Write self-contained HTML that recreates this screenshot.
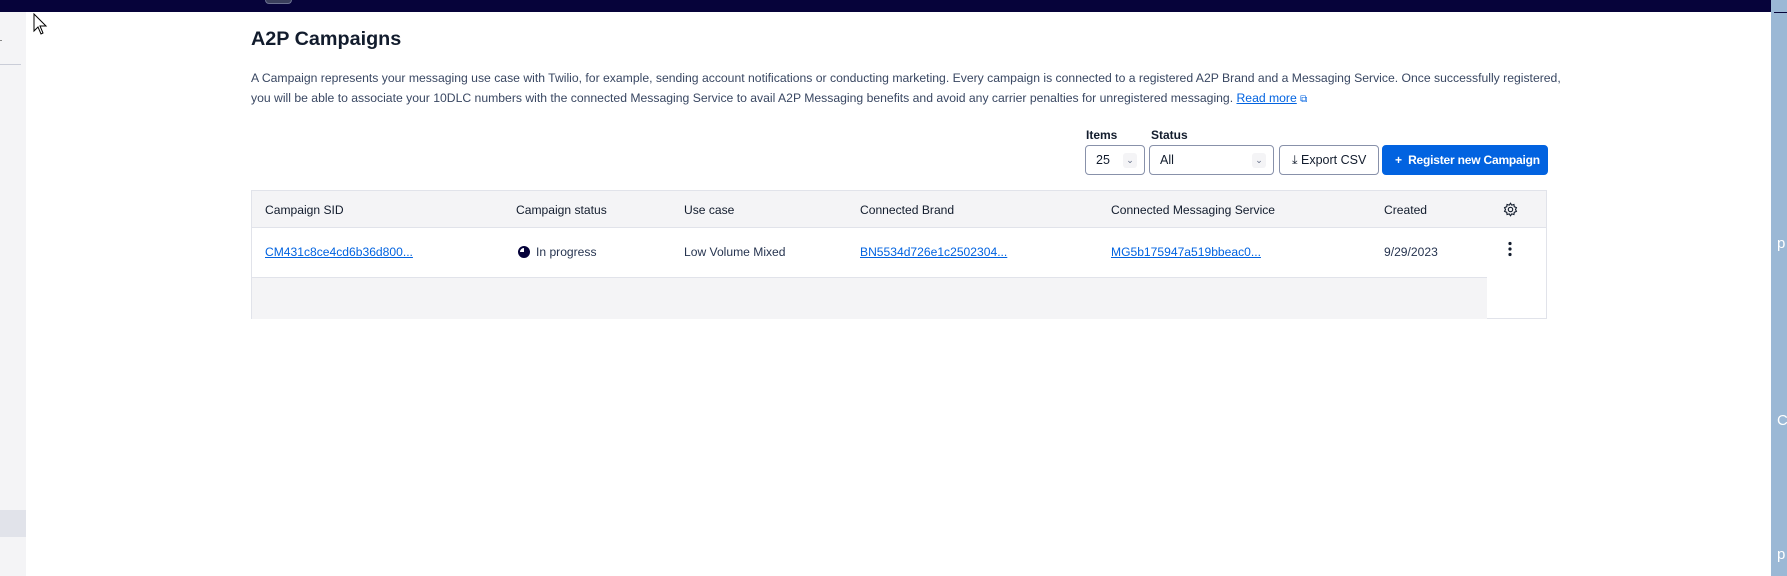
<!DOCTYPE html>
<html><head><meta charset="utf-8"><style>
*{box-sizing:border-box;margin:0;padding:0}
body{width:1787px;height:576px;overflow:hidden;background:#fff;font-family:"Liberation Sans",sans-serif;color:#121c2d;position:relative}
.abs{position:absolute}
.top{left:0;top:0;width:1787px;height:12px;background:#06033a}
.tab{left:265px;top:0;width:27px;height:4px;background:#3a3f5c;border-radius:0 0 4px 4px;border:1px solid #6a7090;border-top:none}
.side{left:0;top:12px;width:26px;height:564px;background:#f4f4f6}
h1{position:absolute;left:251px;top:28px;font-size:19.8px;font-weight:bold;color:#121c2d}
.desc{left:251px;font-size:12.2px;color:#394762;white-space:nowrap;letter-spacing:0}
.lbl{font-size:12px;font-weight:bold;top:128px}
.box{top:145px;height:30px;border:1px solid #8891aa;border-radius:4px;font-size:12.5px;display:flex;align-items:center;padding-left:10px;white-space:nowrap}
.chev{position:absolute;right:7px;top:7px;width:14px;height:15px;background:#f4f4f6;border-radius:3px;font-size:9px;color:#606b85;text-align:center;line-height:15px}
.table{left:251px;top:190px;width:1296px;height:129px;border:1px solid #e1e3ea}
.th{left:0;top:0;width:1294px;height:37px;background:#f4f4f6;border-bottom:1px solid #e1e3ea}
.t{font-size:12.1px;white-space:nowrap;color:#263450}
a{color:#0263e0;text-decoration:underline}
</style></head><body>
<div class="abs top"></div><div class="abs tab"></div>
<div class="abs side"></div>
<div class="abs" style="left:0;top:64px;width:21px;height:1px;background:#cacdd8"></div>
<div class="abs" style="left:0;top:510px;width:26px;height:27px;background:#e1e3ea"></div>
<div class="abs" style="left:0;top:40px;width:2px;height:1px;background:#888"></div>
<svg class="abs" style="left:33px;top:13px" width="16" height="24" viewBox="0 0 16 24"><path d="M1 1 L1 18 L5 14 L8 21 L10 20 L7 13 L13 13 Z" fill="#fff" stroke="#000" stroke-width="1"/></svg>
<h1>A2P Campaigns</h1>
<div class="abs desc" style="top:71px">A Campaign represents your messaging use case with Twilio, for example, sending account notifications or conducting marketing. Every campaign is connected to a registered A2P Brand and a Messaging Service. Once successfully registered,</div>
<div class="abs desc" style="top:91px">you will be able to associate your 10DLC numbers with the connected Messaging Service to avail A2P Messaging benefits and avoid any carrier penalties for unregistered messaging. <a>Read more</a> <span style="color:#0263e0;font-size:10px">⧉</span></div>
<div class="abs lbl" style="left:1086px">Items</div>
<div class="abs lbl" style="left:1151px">Status</div>
<div class="abs box" style="left:1085px;width:60px">25<span class="chev">⌄</span></div>
<div class="abs box" style="left:1149px;width:125px">All<span class="chev">⌄</span></div>
<div class="abs box" style="left:1279px;width:100px;font-size:12.5px;padding-left:12px">⤓&nbsp;Export CSV</div>
<div class="abs box" style="left:1382px;width:166px;background:#0263e0;border-color:#0263e0;color:#fff;font-weight:bold;padding-left:12px;font-size:12px;letter-spacing:-0.2px">+&nbsp; Register new Campaign</div>
<div class="abs table">
<div class="abs th"></div>
<div class="abs" style="left:0;top:86px;width:1235px;height:42px;background:#f4f4f6;border-top:1px solid #e1e3ea"></div>
<div class="abs t" style="left:13px;top:12px;color:#121c2d">Campaign SID</div>
<div class="abs t" style="left:264px;top:12px;color:#121c2d">Campaign status</div>
<div class="abs t" style="left:432px;top:12px;color:#121c2d">Use case</div>
<div class="abs t" style="left:608px;top:12px;color:#121c2d">Connected Brand</div>
<div class="abs t" style="left:859px;top:12px;color:#121c2d">Connected Messaging Service</div>
<div class="abs t" style="left:1132px;top:12px;color:#121c2d">Created</div>
<svg class="abs" style="left:1251px;top:11px" width="15" height="15" viewBox="0 0 24 24" fill="none" stroke="#121c2d" stroke-width="1.8"><circle cx="12" cy="12" r="3.5"/><path d="M12 2l2 3 3.5-1 .5 3.5 3.5 1.5-1.5 3 1.5 3-3.5 1.5-.5 3.5-3.5-1-2 3-2-3-3.5 1-.5-3.5L2.5 15l1.5-3-1.5-3L6 7.5 6.5 4 10 5z"/></svg>
<div class="abs t" style="left:13px;top:54px"><a>CM431c8ce4cd6b36d800...</a></div>
<svg class="abs" style="left:266px;top:55px" width="12" height="12" viewBox="0 0 12 12"><circle cx="6" cy="6" r="5" fill="none" stroke="#06033a" stroke-width="2"/><path d="M6 1A5 5 0 1 1 1 6H6Z" fill="#06033a"/></svg>
<div class="abs t" style="left:284px;top:54px">In progress</div>
<div class="abs t" style="left:432px;top:54px">Low Volume Mixed</div>
<div class="abs t" style="left:608px;top:54px"><a>BN5534d726e1c2502304...</a></div>
<div class="abs t" style="left:859px;top:54px"><a>MG5b175947a519bbeac0...</a></div>
<div class="abs t" style="left:1132px;top:54px">9/29/2023</div>
<svg class="abs" style="left:1255px;top:50px" width="6" height="16" viewBox="0 0 6 16"><circle cx="3" cy="2.5" r="1.6" fill="#121c2d"/><circle cx="3" cy="8" r="1.6" fill="#121c2d"/><circle cx="3" cy="13.5" r="1.6" fill="#121c2d"/></svg>
</div>
<div class="abs" style="left:1771px;top:0;width:16px;height:576px;background:#9bb8d5"></div>
<div class="abs" style="left:1774px;top:12px;width:13px;height:1px;background:#06033a"></div>
<div class="abs" style="left:1777px;top:235px;font-size:15px;color:#fff">p</div>
<div class="abs" style="left:1777px;top:412px;font-size:15px;color:#fff">C</div>
<div class="abs" style="left:1777px;top:546px;font-size:15px;color:#fff">p</div>
</body></html>
